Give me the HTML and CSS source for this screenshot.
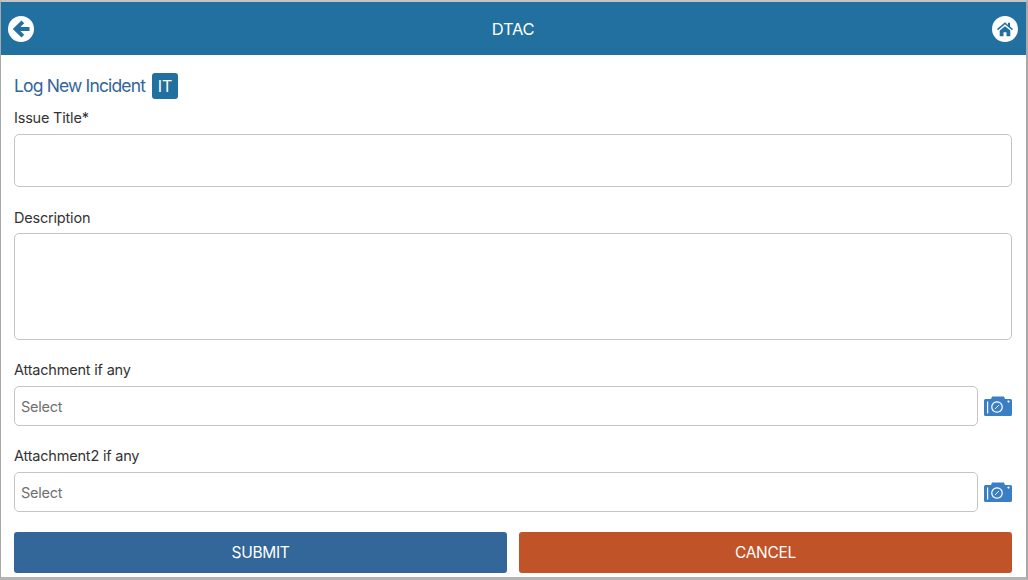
FILE: index.html
```html
<!DOCTYPE html>
<html lang="en">
<head>
<meta charset="utf-8">
<title>DTAC</title>
<link rel="stylesheet" href="styles.css">
</head>
<body>
<div class="frame">
  <header class="topbar">
    <button class="round" aria-label="Back">
      <svg viewBox="0 0 26 26" width="26" height="26"><circle cx="13" cy="13" r="13" fill="#fff"/><path d="M13.500 4.500 4.800 13l8.700 8.500 2.700-2.700-3.800-3.700h9.100v-4.200h-9.100l3.800-3.700z" fill="#21709f"/></svg>
    </button>
    <div class="brand">DTAC</div>
    <button class="round" aria-label="Home">
      <svg viewBox="0 0 26 26" width="26" height="26"><circle cx="13" cy="13" r="13" fill="#fff"/><path d="M13 6.200 5 13l1 1.200 7-5.900 7 5.900 1-1.200-3-2.500V6.800h-2v2.200z" fill="#21709f"/><path d="M7.700 14.600 13 10.200l5.300 4.400v5.700h-3.800v-4h-3v4H7.700z" fill="#21709f"/></svg>
    </button>
  </header>
  <main class="form">
    <div class="title-row">
      <h1 class="title">Log New Incident</h1>
      <span class="tag">IT</span>
    </div>
    <label class="label label-issue">Issue Title*</label>
    <input class="field field-issue" type="text">
    <label class="label label-desc">Description</label>
    <textarea class="field field-desc"></textarea>
    <label class="label label-attach">Attachment if any</label>
    <div class="attach-row">
      <input class="field field-select" type="text" placeholder="Select">
      <svg class="camera" viewBox="0 0 28 20" width="28" height="20"><path fill-rule="evenodd" fill="#3a7fc4" d="M0 4.500Q0 3 1.500 3H7L8 0.500H20L21 3H26.500Q28 3 28 4.500V18.500Q28 20 26.500 20H1.500Q0 20 0 18.500ZM3 5.500V17.500H4.200V5.500ZM13 5.200a5.800 5.800 0 1 0 .01 0ZM13 6.400a4.600 4.600 0 1 1-.01 0ZM24.500 4.500a1 1 0 1 0 .01 0Z"/><path d="M11 13 15 9" stroke="#fff" stroke-width="0.900"/></svg>
    </div>
    <label class="label label-attach2">Attachment2 if any</label>
    <div class="attach-row">
      <input class="field field-select" type="text" placeholder="Select">
      <svg class="camera" viewBox="0 0 28 20" width="28" height="20"><path fill-rule="evenodd" fill="#3a7fc4" d="M0 4.500Q0 3 1.500 3H7L8 0.500H20L21 3H26.500Q28 3 28 4.500V18.500Q28 20 26.500 20H1.500Q0 20 0 18.500ZM3 5.500V17.500H4.200V5.500ZM13 5.200a5.800 5.800 0 1 0 .01 0ZM13 6.400a4.600 4.600 0 1 1-.01 0ZM24.500 4.500a1 1 0 1 0 .01 0Z"/><path d="M11 13 15 9" stroke="#fff" stroke-width="0.900"/></svg>
    </div>
    <div class="actions">
      <button class="btn btn-submit">SUBMIT</button>
      <button class="btn btn-cancel">CANCEL</button>
    </div>
  </main>
</div>
</body>
</html>
```
FILE: styles.css
```css
* { box-sizing: border-box; }
html, body { margin: 0; height: 100%; }
body {
  width: 1028px;
  height: 580px;
  overflow: hidden;
  background: #fff;
  font-family: Inter, Roboto, "Liberation Sans", sans-serif;
  color: #333;
}
.frame {
  width: 1028px;
  height: 580px;
  border-style: solid;
  border-color: #c4c4c4 #a9a9a9 #b4b4b4 #a9a9a9;
  border-width: 2px 2px 3px 1px;
  display: flex;
  flex-direction: column;
}
.topbar {
  height: 53px;
  flex: none;
  background: #21709f;
  color: #fff;
  display: flex;
  align-items: center;
  justify-content: space-between;
  padding: 1px 8px 0 7px;
}
.round {
  width: 26px;
  height: 26px;
  padding: 0;
  border: 0;
  background: none;
  display: block;
}
.round svg { display: block; }
.brand {
  font-size: 16.5px;
  letter-spacing: -0.3px;
}
.form {
  flex: 1;
  padding: 0 14px 0 13px;
  display: flex;
  flex-direction: column;
}
.title-row {
  display: flex;
  align-items: center;
  gap: 7px;
  margin-top: 18px;
  height: 26px;
}
.title {
  margin: 0 0 2px;
  font-size: 17.5px;
  font-weight: 400;
  letter-spacing: -0.85px;
  color: #336699;
}
.tag {
  width: 26px;
  height: 26px;
  border-radius: 3px;
  background: #21709f;
  color: #fff;
  font-size: 16px;
  line-height: 26px;
  text-align: center;
}
.label {
  display: block;
  font-size: 14.5px;
  letter-spacing: -0.2px;
  line-height: 20px;
  color: #333;
}
.label-issue { margin-top: 9px; }
.label-desc { margin-top: 21px; }
.label-attach { margin-top: 20px; }
.label-attach2 { margin-top: 20px; }
.field {
  display: block;
  width: 100%;
  border: 1px solid #c4c4c4;
  border-radius: 5px;
  background: #fff;
  padding: 0 6px;
  font-family: inherit;
  font-size: 14.5px;
  letter-spacing: -0.25px;
  outline: none;
  resize: none;
}
.field-issue { height: 53px; margin-top: 6px; }
.field-desc { height: 107px; margin-top: 5px; }
.attach-row {
  display: flex;
  align-items: center;
  gap: 6px;
  margin-top: 6px;
}
.field-select { flex: 1; height: 40px; width: auto; }
.field-select::placeholder { color: #6f6f6f; opacity: 1; }
.camera { flex: none; display: block; }
.actions {
  display: flex;
  gap: 12px;
  margin-top: 20px;
}
.btn {
  flex: 1;
  height: 41px;
  border: 0;
  border-radius: 3px;
  color: #fff;
  font-family: inherit;
  font-size: 15.5px;
  letter-spacing: -0.3px;
}
.btn-submit { background: #336699; }
.btn-cancel { background: #c05327; }
```
